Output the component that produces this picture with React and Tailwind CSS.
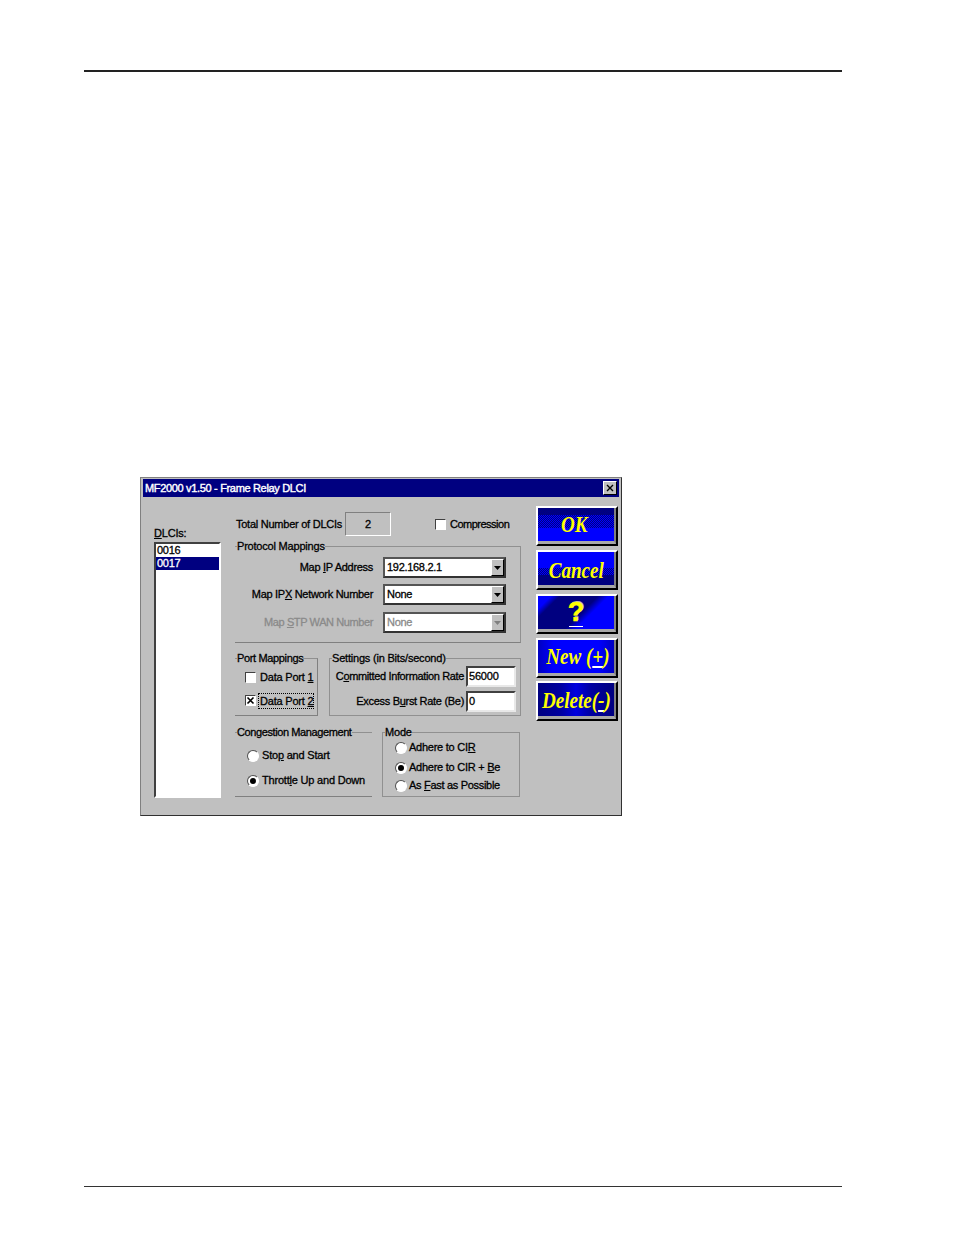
import React from "react";

const ui = "font-['Liberation_Sans',Arial,sans-serif] text-[11px] leading-[13px] tracking-[-0.2px] text-black whitespace-nowrap [-webkit-text-stroke:0.3px_currentColor]";
const sunken = "border border-t-[#404040] border-l-[#404040] border-r-white border-b-white bg-white";

function Group({ label, sides, className, children, labelClass }) {
  return (
    <div className={`relative ${sides} ${className}`}>
      <span className={`absolute left-[2px] top-[-7px] bg-[#c0c0c0] leading-[13px] ${labelClass || ""}`}>{label}</span>
      {children}
    </div>
  );
}

function Combo({ value, disabled, className }) {
  return (
    <div className={`flex h-[21px] w-[123px] items-center border-2 border-t-[#555] border-l-[#555] border-r-[#333] border-b-[#333] bg-white pl-[2px] ${className || ""}`}>
      <span className={`flex-1 ${disabled ? "text-[#8a8a8a]" : ""}`}>{value}</span>
      <span className="flex h-[17px] w-[13px] items-center justify-center border border-t-white border-l-white border-r-black border-b-black bg-[#c0c0c0]">
        <svg width="7" height="4" viewBox="0 0 7 4"><path d="M0 0h7L3.5 4z" fill={disabled ? "#808080" : "#000"} /></svg>
      </span>
    </div>
  );
}

function Check({ checked }) {
  return (
    <span className={`flex h-[11px] w-[11px] shrink-0 items-center justify-center ${sunken}`}>
      {checked && (
        <svg width="9" height="9" viewBox="0 0 9 9"><path d="M1.5 1.5l6 6M7.5 1.5l-6 6" stroke="#000" strokeWidth="1.6" /></svg>
      )}
    </span>
  );
}

function Radio({ checked }) {
  return (
    <span className="flex h-[12px] w-[12px] shrink-0 items-center justify-center rounded-full border border-t-[#505050] border-l-[#505050] border-r-white border-b-white bg-white">
      {checked && <span className="h-[6px] w-[6px] rounded-full bg-black" />}
    </span>
  );
}

function Shell({ bg, className, children }) {
  return (
    <div className={`flex h-[40px] w-[82px] border-2 border-t-white border-l-white border-r-black border-b-black bg-[#c0c0c0] ${className || ""}`}>
      <div className={`flex flex-1 flex-col items-center justify-center overflow-hidden border-r-[2px] border-b-[3px] border-r-[#808080] border-b-[#a8a8a8] ${bg}`}>
        {children}
      </div>
    </div>
  );
}

function Btn({ bg, className, label, nudge }) {
  return (
    <Shell bg={bg} className={className}>
      <span className={`font-['Liberation_Serif',serif] text-[23px] font-bold italic leading-none tracking-normal text-[#ffff00] scale-x-[0.83] [-webkit-text-stroke:0] ${nudge || ""}`}>{label}</span>
    </Shell>
  );
}

export default function App() {
  return (
    <div className={`h-[1235px] overflow-hidden bg-white ${ui}`}>
      <div className="ml-[84px] mt-[70px] h-[2px] w-[758px] bg-[#222]" />
      <div className="ml-[140px] mt-[405px] flex h-[339px] w-[482px] flex-col border border-t-[#808080] border-l-[#808080] border-r-[#303030] border-b-[#303030] bg-[#c0c0c0] p-[2px] pt-[1px]">
        <div className="flex h-[18px] shrink-0 items-center justify-between bg-[#000080] pl-[2px] pr-[2px]">
          <span className="text-white tracking-[-0.33px] [-webkit-text-stroke:0.4px_currentColor]">MF2000 v1.50 - Frame Relay DLCI</span>
          <span className="flex h-[14px] w-[14px] items-center justify-center border border-t-white border-l-white border-r-black border-b-black bg-[#c0c0c0]">
            <svg width="8" height="8" viewBox="0 0 8 8"><path d="M1 1l6 6M7 1l-6 6" stroke="#000" strokeWidth="1.4" /></svg>
          </span>
        </div>
        <div className="flex flex-1">
          {/* DLCI list */}
          <div className="ml-[11px] w-[67px] pt-[30px]">
            <div className="h-[15px]"><u>D</u>LCIs:</div>
            <div className="h-[256px] border-2 border-t-[#404040] border-l-[#404040] border-r-white border-b-white bg-white">
              <div className="h-[13px] pl-[1px] tracking-[-0.3px]">0016</div>
              <div className="h-[13px] bg-[#000080] pl-[1px] tracking-[-0.3px] text-white">0017</div>
            </div>
          </div>

          {/* Middle column */}
          <div className="ml-[14px] w-[286px]">
            <div className="mt-[15px] flex h-[24px] items-center">
              <span className="ml-[1px] w-[109px] tracking-[-0.25px]">Total Number of DLCIs</span>
              <span className="flex h-[24px] w-[46px] items-center justify-center border border-t-[#808080] border-l-[#808080] border-r-white border-b-white">2</span>
              <span className="ml-[44px]"><Check /></span>
              <span className="ml-[4px] tracking-[-0.5px]">Compression</span>
            </div>

            <Group
              label="Protocol Mappings"
              sides="border-t border-r border-b border-t-[#909090] border-r-[#909090] border-b-[#808080]"
              className="mt-[10px] h-[97px] w-[286px] pt-[10px]"
            >
              <div className="flex flex-col tracking-[-0.3px]">
                <div className="flex items-center justify-end">
                  <span className="mr-[10px]">Map <u>I</u>P Address</span>
                  <Combo value="192.168.2.1" className="mr-[14px]" />
                </div>
                <div className="mt-[6px] flex items-center justify-end">
                  <span className="mr-[10px]">Map IP<u>X</u> Network Number</span>
                  <Combo value="None" className="mr-[14px]" />
                </div>
                <div className="mt-[7px] flex items-center justify-end">
                  <span className="mr-[10px] tracking-[-0.4px] text-[#8a8a8a]">Map <u>S</u>TP WAN Number</span>
                  <Combo value="None" disabled className="mr-[14px]" />
                </div>
              </div>
            </Group>

            <div className="mt-[15px] flex">
              <Group
                label="Port Mappings"
                labelClass="tracking-[-0.35px]"
                sides="border-t border-r border-b border-t-[#909090] border-r-[#808080] border-b-[#808080]"
                className="h-[58px] w-[83px] pl-[10px] pt-[12px]"
              >
                <div className="flex h-[13px] items-center gap-[3px]">
                  <Check />
                  <span className="pl-[1px]">Data Port <u>1</u></span>
                </div>
                <div className="mt-[10px] flex h-[13px] items-center gap-[2px]">
                  <Check checked />
                  <span className="border border-dotted border-black pl-[1px] leading-[14px]">Data Port <u>2</u></span>
                </div>
              </Group>
              <Group
                label="Settings (in Bits/second)"
                sides="border border-[#909090]"
                className="ml-[11px] h-[58px] w-[192px] pt-[7px]"
              >
                <div className="flex items-center justify-end pr-[4px]">
                  <span className="mr-[2px] tracking-[-0.36px]">C<u>o</u>mmitted Information Rate</span>
                  <div className="h-[21px] w-[50px] border-2 border-t-[#404040] border-l-[#404040] border-r-[#e8e8e8] border-b-[#e8e8e8] bg-white pl-[1px] leading-[17px]">56000</div>
                </div>
                <div className="mt-[4px] flex items-center justify-end pr-[4px]">
                  <span className="mr-[2px] tracking-[-0.3px]">Excess B<u>u</u>rst Rate (Be)</span>
                  <div className="h-[21px] w-[50px] border-2 border-t-[#404040] border-l-[#404040] border-r-[#e8e8e8] border-b-[#e8e8e8] bg-white pl-[1px] leading-[17px]">0</div>
                </div>
              </Group>
            </div>

            <div className="mt-[16px] flex">
              <Group
                label="Congestion Management"
                labelClass="tracking-[-0.4px]"
                sides="border-t border-b border-t-[#909090] border-b-[#808080]"
                className="h-[65px] w-[137px] pl-[12px] pt-[16px]"
              >
                <div className="flex h-[13px] items-center gap-[3px]"><Radio /><span>Sto<u>p</u> and Start</span></div>
                <div className="mt-[12px] flex h-[13px] items-center gap-[3px]"><Radio checked /><span>Thrott<u>l</u>e Up and Down</span></div>
              </Group>
              <Group
                label="Mode"
                sides="border border-[#909090]"
                className="ml-[10px] h-[65px] w-[138px] pl-[12px] pt-[8px]"
              >
                <div className="flex h-[13px] items-center gap-[2px]"><Radio /><span className="tracking-[-0.25px]">Adhere to CI<u>R</u></span></div>
                <div className="mt-[7px] flex h-[13px] items-center gap-[2px]"><Radio checked /><span className="tracking-[-0.25px]">Adhere to CIR + <u>B</u>e</span></div>
                <div className="mt-[5px] flex h-[13px] items-center gap-[2px]"><Radio /><span className="tracking-[-0.3px]">As <u>F</u>ast as Possible</span></div>
              </Group>
            </div>
          </div>

          {/* Buttons */}
          <div className="ml-[15px] flex w-[82px] flex-col pt-[9px]">
            <Btn nudge="pr-[4px]" label="OK" bg="bg-[linear-gradient(#000080_0_7px,transparent_7px_20px,#0000ff_20px),repeating-conic-gradient(#000080_0_25%,#0000ff_0_50%)] bg-[length:100%_100%,2px_2px]" />
            <Btn className="mt-[4px]" nudge="pt-[3px]" label="Cancel" bg="bg-[linear-gradient(#0000ff_0_16px,transparent_16px_23px,#000080_23px),repeating-conic-gradient(#000080_0_25%,#0000ff_0_50%)] bg-[length:100%_100%,2px_2px]" />
            <Shell className="mt-[4px]" bg="bg-[linear-gradient(135deg,#0000ff_0%,#0000ff_12%,#000080_20%,#000080_55%,#0000ff_65%,#0000ff_100%)]">
              <span className="font-['Liberation_Sans',sans-serif] text-[27px] font-bold leading-[27px] tracking-normal text-[#ffff00] [-webkit-text-stroke:0.5px_#ffff00] [text-shadow:1px_-1px_0_#b0b0b0]">?</span>
              <span className="h-px w-[14px] bg-white" />
            </Shell>
            <Btn className="mt-[4px]" nudge="pl-[4px]" label={<>New (<u className="decoration-white">+</u>)</>} bg="bg-[linear-gradient(90deg,#0000c0_0%,#0000ff_20%,#0000ff_80%,#0000c0_100%)]" />
            <Btn className="mt-[3px]" nudge="pl-[2px] pt-[1px]" label={<>Delete(<u className="decoration-white">-</u>)</>} bg="bg-[linear-gradient(90deg,#000080_0%,#0000a0_30%,#0000e0_50%,#0000a0_70%,#000080_100%)]" />
          </div>
        </div>
      </div>
      <div className="ml-[84px] mt-[370px] h-px w-[758px] bg-[#333]" />
    </div>
  );
}
